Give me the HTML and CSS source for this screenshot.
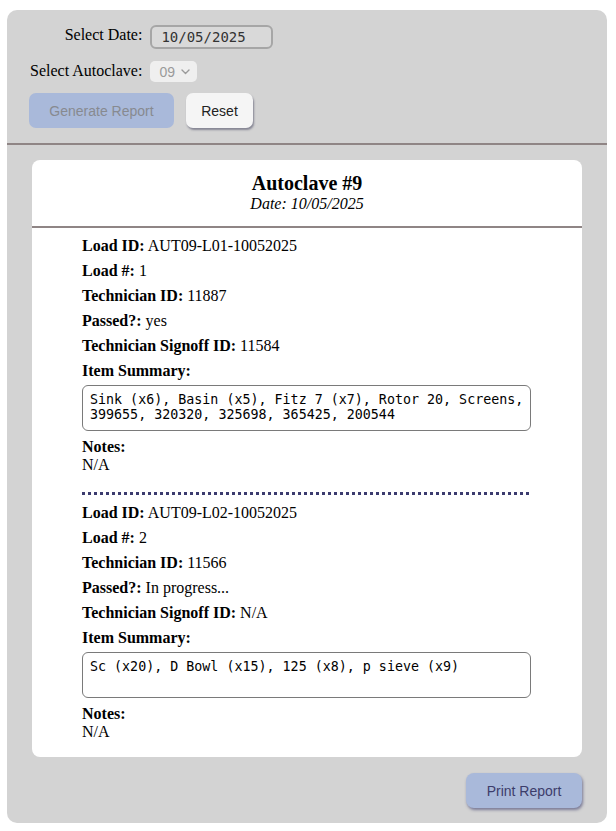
FILE: index.html
```html
<!DOCTYPE html>
<html lang="en">
<head>
<meta charset="utf-8">
<title>Autoclave Report</title>
<link rel="stylesheet" href="styles.css">
</head>
<body>
<div class="panel">
  <div class="controls">
    <div class="fields">
      <label class="field-label" for="date">Select Date:</label>
      <input class="date-input" id="date" type="text" value="10/05/2025" readonly>
      <label class="field-label">Select Autoclave:</label>
      <span class="select">
        <span class="select-value">09</span>
        <svg class="chevron" width="9" height="6" viewBox="0 0 9 6"><path d="M1 1 L4.5 4.5 L8 1" fill="none" stroke="#9a9a9a" stroke-width="1.4" stroke-linecap="round" stroke-linejoin="round"/></svg>
      </span>
    </div>
    <div class="actions">
      <button class="btn btn-generate" type="button">Generate Report</button>
      <button class="btn btn-reset" type="button">Reset</button>
    </div>
  </div>
  <div class="divider"></div>

  <div class="report">
    <div class="report-header">
      <h3 class="report-title">Autoclave #9</h3>
      <div class="report-date">Date: 10/05/2025</div>
    </div>
    <div class="loads">
      <div class="load">
        <div class="row"><b>Load ID:</b> AUT09-L01-10052025</div>
        <div class="row"><b>Load #:</b> 1</div>
        <div class="row"><b>Technician ID:</b> 11887</div>
        <div class="row"><b>Passed?:</b> yes</div>
        <div class="row"><b>Technician Signoff ID:</b> 11584</div>
        <div class="row"><b>Item Summary:</b></div>
        <textarea class="summary" readonly>Sink (x6), Basin (x5), Fitz 7 (x7), Rotor 20, Screens, 399655, 320320, 325698, 365425, 200544</textarea>
        <div class="notes"><b>Notes:</b><br>N/A</div>
      </div>
      <div class="separator"></div>
      <div class="load">
        <div class="row"><b>Load ID:</b> AUT09-L02-10052025</div>
        <div class="row"><b>Load #:</b> 2</div>
        <div class="row"><b>Technician ID:</b> 11566</div>
        <div class="row"><b>Passed?:</b> In progress...</div>
        <div class="row"><b>Technician Signoff ID:</b> N/A</div>
        <div class="row"><b>Item Summary:</b></div>
        <textarea class="summary" readonly>Sc (x20), D Bowl (x15), 125 (x8), p sieve (x9)</textarea>
        <div class="notes"><b>Notes:</b><br>N/A</div>
      </div>
    </div>
  </div>

  <div class="footer">
    <button class="btn btn-print" type="button">Print Report</button>
  </div>
</div>
</body>
</html>
```

FILE: styles.css
```css
html, body {
  margin: 0;
  padding: 0;
  background: #ffffff;
}

body {
  font-family: "Liberation Serif", "Times New Roman", serif;
  font-size: 16px;
  color: #000;
}

.panel {
  width: 600px;
  margin: 10px 0 0 7px;
  background: #d3d3d3;
  border-radius: 10px;
  padding-bottom: 15px;
}

.controls {
  padding: 15px 20px 15px 22px;
}

.fields {
  display: grid;
  grid-template-columns: auto auto;
  justify-content: start;
  align-items: start;
  column-gap: 8px;
  row-gap: 12px;
  padding-left: 1px;
}

.field-label {
  justify-self: end;
  line-height: 18px;
  padding-top: 1px;
  font-size: 16px;
}

.date-input {
  box-sizing: border-box;
  width: 123px;
  height: 24px;
  margin: 0;
  padding: 0 0 0 9px;
  border: 2px solid #a6a6a6;
  border-radius: 6px;
  background: #d9d9d9;
  font-family: "DejaVu Sans Mono", monospace;
  font-size: 14px;
  color: #333;
  outline: none;
}

.select {
  display: flex;
  align-items: center;
  gap: 6px;
  box-sizing: border-box;
  width: 47px;
  height: 21px;
  padding: 0 6px 0 9px;
  background: #efefef;
  border-radius: 5px;
  color: #9a9a9a;
  font-family: "Liberation Sans", Arial, sans-serif;
  font-size: 14px;
}

.chevron {
  display: block;
  margin-top: 1px;
}

.actions {
  display: flex;
  gap: 12px;
  margin-top: 11px;
}

.btn {
  box-sizing: border-box;
  height: 35px;
  border: none;
  border-radius: 7px;
  font-family: "Liberation Sans", Arial, sans-serif;
  font-size: 14px;
  padding: 0;
  margin: 0;
  cursor: pointer;
}

.btn-generate {
  width: 145px;
  background: #a9b9da;
  color: #878a90;
}

.btn-reset {
  width: 67px;
  background: #f5f5f5;
  color: #222;
  box-shadow: 1px 2px 2px rgba(40, 40, 70, 0.45);
}

.divider {
  height: 2px;
  background: #8f8585;
}

.report {
  margin: 15px 25px 0 25px;
  background: #ffffff;
  border-radius: 8px;
  padding-bottom: 16px;
}

.report-header {
  text-align: center;
  padding: 12px 0 13px;
  border-bottom: 2px solid #8f8585;
}

.report-title {
  margin: 0;
  font-size: 20px;
  font-weight: bold;
  line-height: 23px;
}

.report-date {
  font-style: italic;
  font-size: 16px;
  line-height: 18px;
}

.loads {
  padding: 0 51px 0 50px;
}

.load {
  padding-top: 5px;
}

.row {
  line-height: 25px;
}

.summary {
  display: block;
  box-sizing: border-box;
  width: 449px;
  height: 46px;
  margin: 2px 0 0 0;
  padding: 6px 4px 6px 7px;
  border: 1px solid #7a7a7a;
  border-radius: 6px;
  font-family: "DejaVu Sans Mono", monospace;
  font-size: 13.333px;
  line-height: 15px;
  color: #000;
  background: #fff;
  resize: none;
  overflow: hidden;
  outline: none;
}

.notes {
  margin-top: 7px;
  line-height: 18px;
}

.separator {
  height: 3px;
  margin-top: 18px;
  background: repeating-linear-gradient(to right, #3b3b6e 0 3px, transparent 3px 6px);
}

.footer {
  display: flex;
  justify-content: flex-end;
  padding: 16px 25px 0 0;
}

.btn-print {
  width: 116px;
  background: #a9b9da;
  color: #3d3d6b;
  border-radius: 8px;
  box-shadow: 1px 2px 3px rgba(50, 50, 100, 0.55);
}
```
